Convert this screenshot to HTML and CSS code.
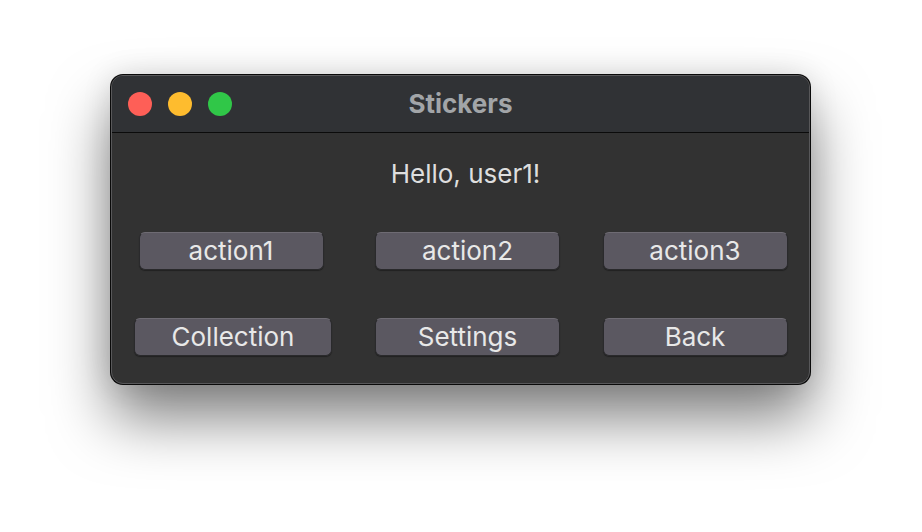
FILE: index.html
```html
<!DOCTYPE html>
<html>
<head>
<meta charset="utf-8">
<link rel="stylesheet" href="styles.css">
</head>
<body>
<div class="window">
  <div class="titlebar">
    <div class="lights">
      <span class="light red"></span>
      <span class="light yellow"></span>
      <span class="light green"></span>
    </div>
    <div class="title">Stickers</div>
  </div>
  <div class="content">
    <div class="greeting">Hello, user1!</div>
    <div class="grid">
      <button class="btn narrow">action1</button>
      <button class="btn narrow">action2</button>
      <button class="btn narrow">action3</button>
      <button class="btn wide">Collection</button>
      <button class="btn narrow">Settings</button>
      <button class="btn narrow">Back</button>
    </div>
  </div>
</div>
</body>
</html>
```
FILE: styles.css
```css
html, body {
  margin: 0;
  padding: 0;
  background: #ffffff;
  width: 922px;
  height: 532px;
  overflow: hidden;
}
body {
  font-family: Inter, "Liberation Sans", sans-serif;
  padding-top: 75px;
  box-sizing: border-box;
}
.window {
  width: 699px;
  height: 309px;
  margin-left: 111px;
  box-sizing: border-box;
  border: 1px solid #58585a;
  border-radius: 12px;
  background: #323232;
  overflow: hidden;
  box-shadow: 0 0 0 1px #0a0a0a, 0 34px 60px rgba(0, 0, 0, 0.5), 0 0 30px rgba(0, 0, 0, 0.12);
  display: flex;
  flex-direction: column;
}
.titlebar {
  height: 57px;
  flex: none;
  background: #303235;
  border-bottom: 1px solid #0b0b0b;
  box-sizing: border-box;
  position: relative;
  display: flex;
  align-items: center;
  justify-content: center;
}
.lights {
  position: absolute;
  left: 16px;
  top: 16px;
  display: flex;
  gap: 16px;
}
.light {
  width: 24px;
  height: 24px;
  border-radius: 50%;
  display: block;
}
.red { background: #fe5f57; }
.yellow { background: #febc2e; }
.green { background: #30c748; }
.title {
  color: #a2a5a8;
  font-weight: 700;
  font-size: 26px;
  margin-top: -2px;
}
.content {
  flex: 1;
  display: flex;
  flex-direction: column;
  align-items: center;
}
.greeting {
  color: #dedede;
  font-size: 26px;
  margin-top: 26px;
  margin-left: 10px;
  height: 30px;
  line-height: 30px;
}
.grid {
  margin-top: 43px;
  display: grid;
  grid-template-columns: 198px 185px 184px;
  column-gap: 43px;
  row-gap: 48px;
  align-self: flex-start;
  margin-left: 22px;
}
.btn {
  height: 38px;
  box-sizing: border-box;
  border: 1px solid #2a2a2c;
  border-top-color: #6e6b73;
  border-radius: 6px;
  background: #5b5861;
  color: #e8e8e8;
  font-family: Inter, "Liberation Sans", sans-serif;
  font-size: 26px;
  padding: 0;
  justify-self: center;
  line-height: 34px;
  box-shadow: 0 1px 1px rgba(0, 0, 0, 0.35);
}
.btn:first-child { margin-left: -4px; }
.narrow { width: 185px; }
.wide { width: 198px; }
```
